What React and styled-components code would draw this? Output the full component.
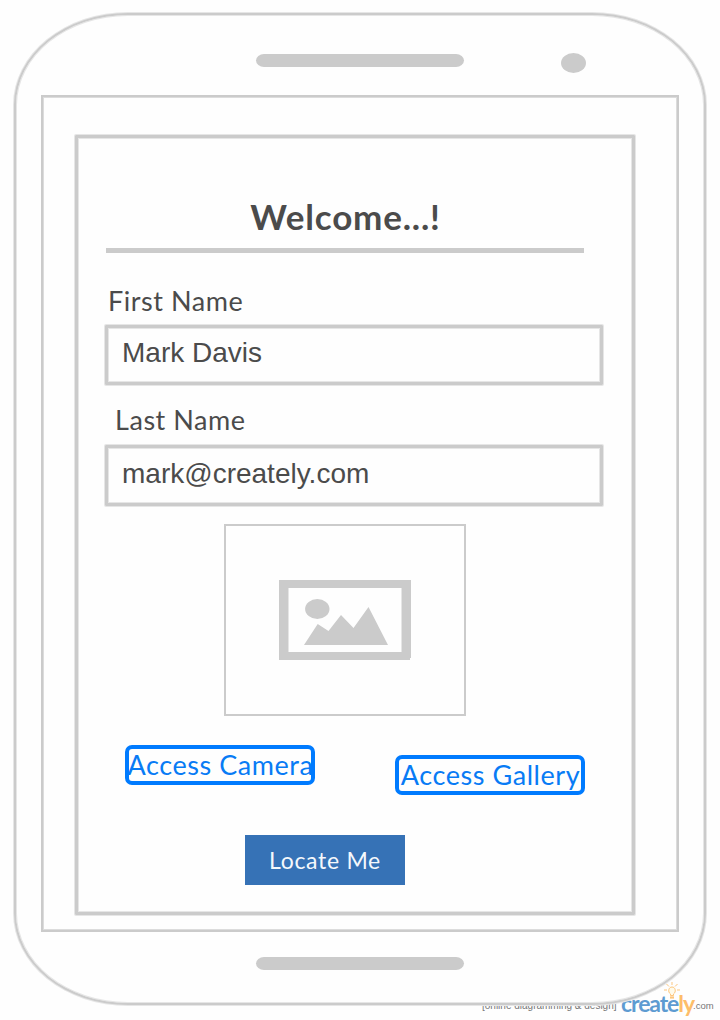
import React from 'react';
import styled, { createGlobalStyle } from 'styled-components';

const LINE = '#cbcbcb';
const SOFT = '#e6e6e6';
const PAPER = '#fefefe';

const GlobalStyle = createGlobalStyle`
  * { box-sizing: border-box; }
  body { margin: 0; background: ${PAPER}; }
`;

const Page = styled.main`
  position: relative;
  width: 720px;
  height: 1020px;
  padding: 13px 14px 15px;
  overflow: hidden;
  background: ${PAPER};
  color: #4b4b4b;
  font-family: Lato, "Liberation Sans", sans-serif;
`;

const Phone = styled.div`
  position: relative;
  display: flex;
  flex-direction: column;
  width: 692px;
  height: 992px;
  padding: 39px 25px 0;
  border: 2px solid ${LINE};
  border-radius: 114px / 92px;
  box-shadow: 0 0 0 1px ${SOFT}, inset 0 0 0 1px ${SOFT};
  background: ${PAPER};
`;

const TopBezel = styled.div`
  display: flex;
  height: 41px;
  padding-left: 215px;
`;

const Speaker = styled.div`
  width: 208px;
  height: 13px;
  border-radius: 8px / 6.5px;
  background: ${LINE};
`;

const Lens = styled.div`
  width: 25px;
  height: 20px;
  margin: -1px 0 0 97px;
  border-radius: 50%;
  background: ${LINE};
`;

const Screen = styled.div`
  width: 638px;
  height: 837px;
  padding: 38px 32px;
  border: 2px solid ${LINE};
  box-shadow: inset 0 0 0 1px #dcdcdc;
`;

const BottomBezel = styled.div`
  padding: 25px 0 0 215px;
`;

const Panel = styled.form`
  display: flex;
  flex-direction: column;
  width: 560px;
  height: 780px;
  padding: 0 27px;
  border: 3px solid ${LINE};
  border-radius: 1px;
  box-shadow: 0 0 0 1px ${SOFT}, inset 0 0 0 1px ${SOFT};
`;

const Title = styled.h1`
  width: 478px;
  height: 115px;
  margin: 0 0 0 1px;
  padding: 56px 0 0 1px;
  border-bottom: 5px solid ${LINE};
  font-size: 35px;
  font-weight: 700;
  line-height: 44px;
  letter-spacing: 0.8px;
  text-align: center;
`;

const Label = styled.label`
  height: ${(p) => p.$height}px;
  padding: ${(p) => p.$top}px 0 0 ${(p) => p.$indent}px;
  font-size: 27px;
  line-height: 34px;
  letter-spacing: 0.55px;
`;

const Field = styled.input`
  width: 498px;
  height: ${(p) => p.$height}px;
  padding: 0 14px ${(p) => p.$lift}px;
  border: 3px solid ${LINE};
  border-radius: 1px;
  box-shadow: 0 0 0 1px ${SOFT}, inset 0 0 0 1px ${SOFT};
  outline: none;
  background: transparent;
  color: inherit;
  font: 28px "Liberation Sans", sans-serif;
`;

const Preview = styled.div`
  display: flex;
  flex-shrink: 0;
  align-items: center;
  justify-content: center;
  width: 242px;
  height: 192px;
  margin: 18px 0 0 119px;
  border: 2px solid ${LINE};
`;

const Actions = styled.div`
  display: flex;
  align-items: flex-start;
  gap: 80px;
  margin: 29px 0 0 20px;
`;

const OutlineButton = styled.button`
  display: flex;
  align-items: center;
  justify-content: center;
  width: 190px;
  height: 40px;
  margin: ${(p) => p.$drop || 0}px 0 0;
  padding: 0 0 0 1px;
  border: 4px solid #007bff;
  border-radius: 7px;
  overflow: hidden;
  background: transparent;
  color: #087bf5;
  font: 27px/34px Lato, sans-serif;
  letter-spacing: 0.55px;
  white-space: nowrap;
`;

const SolidButton = styled.button`
  width: 160px;
  height: 50px;
  margin: 40px 0 0 140px;
  padding: 0;
  border: 0;
  background: #3672b6;
  color: #f4f8fc;
  font: 23px/50px Lato, sans-serif;
  letter-spacing: 0.7px;
`;

const Watermark = styled.div`
  position: absolute;
  left: 482px;
  top: 980px;
  display: flex;
  width: 238px;
  height: 40px;
  color: #777;
  font-family: "Liberation Sans", sans-serif;
  font-size: 10px;
  white-space: nowrap;
`;

const Tagline = styled.span`
  width: 139px;
  padding-top: 20px;
`;

const Brand = styled.span`
  width: 72px;
  padding-top: 8px;
  color: #5d9bd1;
  font: 700 23px/30px Lato, sans-serif;
  letter-spacing: -1.1px;
`;

const Accent = styled.span`
  color: #fdbd69;
`;

const Suffix = styled.span`
  padding-top: 20px;
  font-size: 9.5px;
`;

const Bulb = styled.svg`
  position: absolute;
  left: 182px;
  top: 1px;
`;

const PictureIcon = () => (
  <svg width="132" height="80" viewBox="0 0 132 80" fill={LINE}>
    <path fillRule="evenodd" d="M0 0H132V78H131V80H0ZM9.5 8V72H122.5V8Z" />
    <ellipse cx="38.3" cy="29" rx="12.2" ry="10" />
    <path d="M25 65L38.7 44L49.5 51L62 35L74.5 48L89.5 27L109 65Z" />
  </svg>
);

const BulbIcon = () => (
  <Bulb width="16" height="20" viewBox="0 0 16 20" fill="none" stroke="#fdc67c" strokeWidth="1">
    <path d="M8 1V4M2.5 3L5 5.5M13.5 3L11 5.5M0 9H3M13 9H16" />
    <path d="M6.5 14.5V13C3.5 11 4.5 6 8 6S12.5 11 9.5 13V14.5Z" fill="#fffbea" />
    <path d="M6 16.5H10" strokeWidth="2.2" />
  </Bulb>
);

export default function App() {
  return (
    <>
      <GlobalStyle />
      <Page>
        <Watermark>
          <Tagline>[online diagramming &amp; design]</Tagline>
          <Brand>create<Accent>ly</Accent></Brand>
          <Suffix>.com</Suffix>
          <BulbIcon />
        </Watermark>
        <Phone>
          <TopBezel>
            <Speaker />
            <Lens />
          </TopBezel>
          <Screen>
            <Panel>
              <Title>Welcome...!</Title>
              <Label htmlFor="first" $height={72} $top={31} $indent={3}>First Name</Label>
              <Field id="first" $height={60} $lift={4} defaultValue="Mark Davis" />
              <Label htmlFor="last" $height={60} $top={18} $indent={10}>Last Name</Label>
              <Field id="last" $height={61} $lift={3} defaultValue="mark@creately.com" />
              <Preview><PictureIcon /></Preview>
              <Actions>
                <OutlineButton type="button">Access Camera</OutlineButton>
                <OutlineButton type="button" $drop={10}>Access Gallery</OutlineButton>
              </Actions>
              <SolidButton type="button">Locate Me</SolidButton>
            </Panel>
          </Screen>
          <BottomBezel><Speaker /></BottomBezel>
        </Phone>
      </Page>
    </>
  );
}
